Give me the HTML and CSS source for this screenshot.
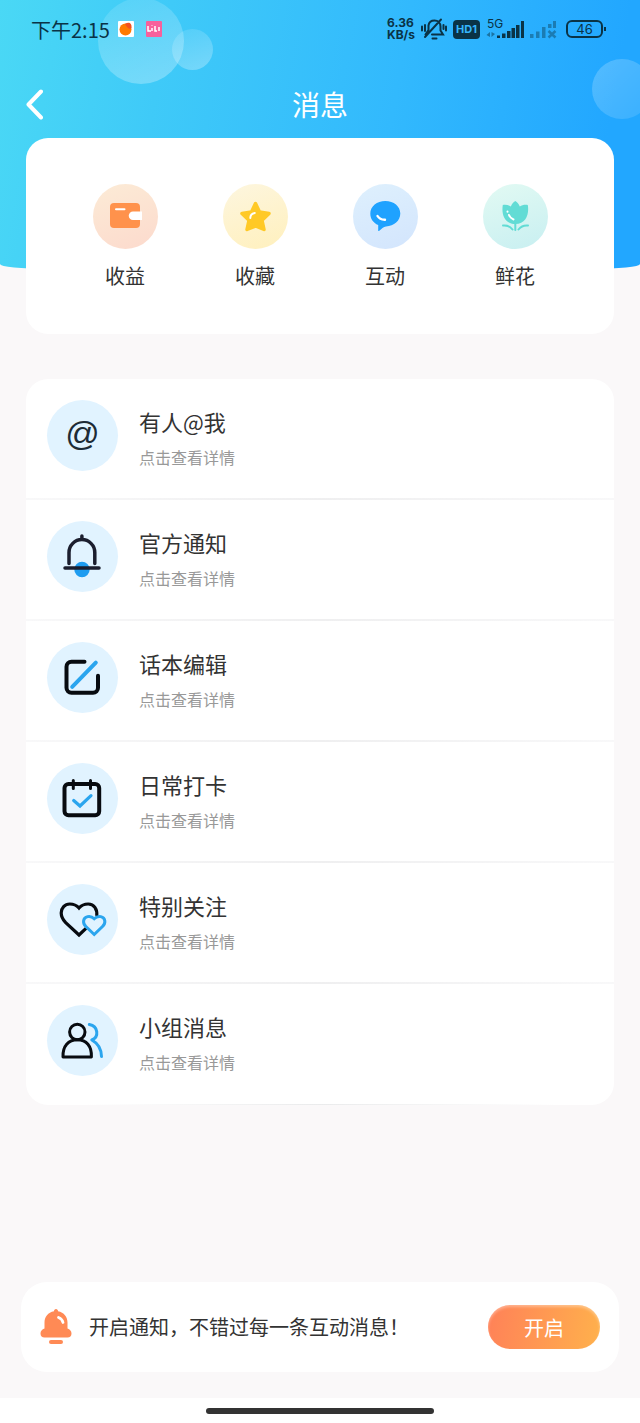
FILE: index.html
```html
<!DOCTYPE html>
<html lang="zh-CN">
<head>
    <meta charset="UTF-8">
    <meta name="viewport" content="width=device-width, initial-scale=1.0">
    <title>消息</title>
    <link rel="stylesheet" href="styles.css">
</head>
<body>
    <header class="header">
        <span class="bubble bubble-large"></span>
        <span class="bubble bubble-small"></span>
        <span class="bubble bubble-right"></span>

        <div class="status-bar">
            <span class="clock">下午2:15</span>
            <svg class="app-icon" width="16" height="16" viewBox="0 0 16 16">
                <rect width="16" height="16" rx="1" fill="#fff"/>
                <circle cx="7.5" cy="8.5" r="6" fill="#ff7a00"/>
                <path d="M7 3C10 1 14 1 13.500 7 12 9 9 7 7 3z" fill="#f4511e"/>
            </svg>
            <svg class="app-icon" width="16" height="16" viewBox="0 0 16 16">
                <rect width="16" height="16" rx="1" fill="#f7609c"/>
                <path d="M2 5v5h3M6 7v3M9 5v5h2M13 6v4M6 4.500v.5" fill="none" stroke="#fff" stroke-width="1.500"/>
            </svg>
            <div class="status-right">
                <div class="speed">
                    <span>6.36</span>
                    <span>KB/s</span>
                </div>
                <svg class="mute" width="26" height="24" viewBox="0 0 26 24" fill="none" stroke="#0a3346" stroke-width="2" stroke-linecap="round">
                    <path d="M11 17.500h11l-2.500-4V9.500C19.500 6 17 3.500 13.500 3.500c-3 0-5.500 1.500-6 5V13L4.500 17.500M20 2.500L4 20M11.500 21.500h4M1 9.500v4M4 8v6M25 9.500v4M22.500 8v4"/>
                </svg>
                <span class="hd">HD1</span>
                <div class="signal">
                    <span class="network">5G</span>
                    <svg width="39" height="22" viewBox="0 0 39 22" fill="#0a3346">
                        <path d="M11 17.500h3V20h-3zM16 15.500h3.500V20H16zM21 13h3.500v7H21zM25.500 10H29v10h-3.500zM30 7h3.500v13H30zM35 3h3v17h-3z"/>
                        <path d="M4 14v5l-3.500-2zM5.500 14v5l3.500-3z" opacity=".5"/>
                    </svg>
                </div>
                <svg class="signal-off" width="28" height="22" viewBox="0 0 28 22" fill="#0a3346" opacity=".4">
                    <path d="M1 16h3.500v4H1zM7 13.500h3.500V20H7zM13 9h3.500v11H13zM19 6h3.500v4H19zM24 3h3v7h-3z"/>
                    <path d="M19.500 13l7 6.500M26.500 13l-7 6.500" stroke="#0a3346" stroke-width="2.500"/>
                </svg>
                <span class="battery">46</span>
            </div>
        </div>

        <nav class="nav">
            <button class="back" type="button" aria-label="返回">
                <svg width="17" height="31" viewBox="0 0 17 31" fill="none" stroke="#fff" stroke-width="4" stroke-linecap="round" stroke-linejoin="round">
                    <path d="M15 2.500L2.500 15.500 15 28.500"/>
                </svg>
            </button>
            <h1 class="page-title">消息</h1>
        </nav>
    </header>

    <main class="content">
        <section class="card shortcuts">
            <a class="shortcut" href="#">
                <svg class="shortcut-icon income" viewBox="0 0 65 65">
                    <rect x="17" y="19" width="30" height="25" rx="4" fill="#ff924c"/>
                    <path d="M49 27.500H40a4.200 4.200 0 0 0 0 8.500h9z" fill="#fff"/>
                    <path d="M23 25.300h8.500" stroke="#fff" stroke-width="2" stroke-linecap="round"/>
                </svg>
                <span>收益</span>
            </a>
            <a class="shortcut" href="#">
                <svg class="shortcut-icon favorite" viewBox="0 0 65 65">
                    <path d="M32.500 19.500l4 8.500 9.500 1.500-7 6.800 2 9.200-8.500-3.500-8.500 3.500 2-9.200-7-6.800 9.500-1.500z" fill="#ffc926" stroke="#ffc926" stroke-width="3.500" stroke-linejoin="round"/>
                    <path d="M27.300 34c0-2.500 2-4.500 4.500-5" fill="none" stroke="#fff" stroke-width="2" stroke-linecap="round"/>
                </svg>
                <span>收藏</span>
            </a>
            <a class="shortcut" href="#">
                <svg class="shortcut-icon interact" viewBox="0 0 65 65">
                    <path d="M32.300 17c8.500 0 15 5.300 15 12.500S41 42 33 42.500c-2.500.3-4.500 2.500-7 4.500-.5.300-.800 0-.800-.5v-5.500c-5-2-7.900-6.300-7.900-11.500C17.300 22.300 24 17 32.300 17z" fill="#1fa2ff"/>
                    <path d="M24.500 32c1.500 2.500 4 3.800 7.500 3.700" fill="none" stroke="#fff" stroke-width="2.400" stroke-linecap="round"/>
                </svg>
                <span>互动</span>
            </a>
            <a class="shortcut" href="#">
                <svg class="shortcut-icon flower" viewBox="0 0 65 65" fill="none" stroke="#62dcd5" stroke-linecap="round">
                    <path d="M32.300 17c2 1.200 3.500 3 4.500 5.500 2.200-1.500 5-2 8-1.500 1.500 9-1.500 19-12.500 19s-14-10-12.500-19c3-.5 5.500 0 8 1.500 1-2.500 2.500-4.300 4.500-5.500z" fill="#62dcd5" stroke="none"/>
                    <path d="M32.300 38v8M20 41.500c4-.5 7 .8 9.500 4M45 41.500c-4-.5-7 .8-9.500 4" stroke-width="2"/>
                    <path d="M26 31c1 2.500 2.500 3.800 4.500 4.500M24.500 27.500v.2" stroke="#fff" stroke-width="2"/>
                </svg>
                <span>鲜花</span>
            </a>
        </section>

        <section class="card messages">
            <a class="message" href="#">
                <span class="message-icon at">@</span>
                <span class="message-text">
                    <span class="message-title">有人@我</span>
                    <span class="message-desc">点击查看详情</span>
                </span>
            </a>
            <a class="message" href="#">
                <svg class="message-icon" viewBox="0 0 71 71">
                    <circle cx="35" cy="48.500" r="7.700" fill="#1e9cf0"/>
                    <path d="M22 42.500V31.500a12.900 12.900 0 0 1 25.800 0v11M34.900 18v-3M18 47h34" fill="none" stroke="#1b1e2e" stroke-width="3.500" stroke-linecap="round"/>
                </svg>
                <span class="message-text">
                    <span class="message-title">官方通知</span>
                    <span class="message-desc">点击查看详情</span>
                </span>
            </a>
            <a class="message" href="#">
                <svg class="message-icon" viewBox="0 0 71 71" fill="none" stroke="#080b10" stroke-width="4" stroke-linecap="round">
                    <path d="M37.500 19.700H24.500a5 5 0 0 0-5 5v21a5 5 0 0 0 5 5h21.500a5 5 0 0 0 5-5v-12"/>
                    <path d="M48.800 20.700L25.200 44.800" stroke="#2ba5ee"/>
                </svg>
                <span class="message-text">
                    <span class="message-title">话本编辑</span>
                    <span class="message-desc">点击查看详情</span>
                </span>
            </a>
            <a class="message" href="#">
                <svg class="message-icon" viewBox="0 0 71 71" fill="none" stroke="#080b10" stroke-width="4" stroke-linecap="round">
                    <rect x="17.500" y="21" width="34.700" height="31.300" rx="4"/>
                    <path d="M26.300 17.500v8M43.500 17.500v8" stroke-width="3"/>
                    <path d="M26.700 37.500l6.300 5.500 11-10.300" stroke="#2ba5ee" stroke-width="3.200"/>
                </svg>
                <span class="message-text">
                    <span class="message-title">日常打卡</span>
                    <span class="message-desc">点击查看详情</span>
                </span>
            </a>
            <a class="message" href="#">
                <svg class="message-icon" viewBox="0 0 71 71" fill="none" stroke="#080b10" stroke-width="3.200">
                    <path d="M49.800 32C50.400 25 47 20 41.200 20c-4 0-7 1.500-9.200 4-2.200-2.500-5.200-4-9.200-4-5 0-8.600 4-8.600 9 0 4 1.500 6.500 4.500 9.700L32 51l7-6.700"/>
                    <path d="M47.200 50.500l-8.300-8c-2-2-2.700-3.500-2.300-5.800.7-4.200 6.500-6 10.600-2 4.100-4 9.900-2.200 10.600 2 .4 2.300-.3 3.800-2.300 5.800z" stroke="#2ba5ee" stroke-width="3"/>
                </svg>
                <span class="message-text">
                    <span class="message-title">特别关注</span>
                    <span class="message-desc">点击查看详情</span>
                </span>
            </a>
            <a class="message" href="#">
                <svg class="message-icon" viewBox="0 0 71 71" fill="none" stroke="#080b10" stroke-width="3" stroke-linejoin="round">
                    <circle cx="30.300" cy="27" r="7.700"/>
                    <path d="M16 52c-.5-11 5.500-17.300 14.400-17.300S44.900 41 44.400 52z"/>
                    <path d="M42.300 19.500c9 1.500 10 12.500 2.500 15.500 6.500 3.500 9.500 9 9.700 16.500" stroke="#2ba5ee" stroke-linecap="round"/>
                </svg>
                <span class="message-text">
                    <span class="message-title">小组消息</span>
                    <span class="message-desc">点击查看详情</span>
                </span>
            </a>
        </section>
    </main>

    <section class="notice">
        <svg width="32" height="36" viewBox="0 0 32 36" fill="#ff8a55">
            <path d="M16 0c1.200 0 2 1 2 2.200 6 1.200 9.500 5.500 9.500 11.300v6c2.500 1 4 2.500 4 5 0 2.500-1.500 4-4 4h-23c-2.500 0-4-1.500-4-4 0-2.500 1.500-4 4-5v-6C4.500 7.700 8 3.400 14 2.200 14 1 14.800 0 16 0z"/>
            <rect x="9" y="31" width="14" height="4" rx="2"/>
            <path d="M18.500 8.500c2.500 1 4 2.500 4.500 5" fill="none" stroke="#fff" stroke-width="2.800" stroke-linecap="round"/>
        </svg>
        <p class="notice-text">开启通知，不错过每一条互动消息！</p>
        <button class="enable-btn" type="button">开启</button>
    </section>

    <footer class="gesture-bar">
        <span class="gesture-handle"></span>
    </footer>
</body>
</html>
```
FILE: styles.css
```css
* {
    box-sizing: border-box;
}
body {
    margin: 0;
    min-height: 100vh;
    display: flex;
    flex-direction: column;
    background-color: #faf8f9;
    color: #333;
    font-family: "Noto Sans CJK SC", sans-serif;
}
a {
    color: inherit;
    text-decoration: none;
}
button {
    border: none;
    font-family: inherit;
    cursor: pointer;
}

/* Header */
.header {
    position: relative;
    overflow: hidden;
    padding-bottom: 119px;
    border-radius: 0 0 48px 48px / 0 0 5px 5px;
    background: linear-gradient(100deg, #4ad8f5 0%, #3fcaf8 25%, #32b9fd 60%, #22a7ff 92%);
}
.bubble {
    position: absolute;
    border-radius: 50%;
    background: linear-gradient(160deg, rgba(255, 255, 255, 0.1), rgba(255, 255, 255, 0.3));
}
.bubble-large {
    top: -2px;
    left: 98px;
    width: 86px;
    height: 86px;
}
.bubble-small {
    top: 29px;
    left: 172px;
    width: 41px;
    height: 41px;
}
.bubble-right {
    top: 59px;
    right: -12px;
    width: 60px;
    height: 60px;
    background: linear-gradient(135deg, rgba(255, 255, 255, 0.22), rgba(255, 255, 255, 0.1));
}
.status-bar {
    position: relative;
    display: flex;
    align-items: center;
    height: 58px;
    padding: 0 34px 0 31px;
    color: #0a3346;
}
.clock {
    font-size: 20px;
}
.app-icon {
    margin-left: 8px;
}
.app-icon + .app-icon {
    margin-left: 12px;
}
.status-right {
    display: flex;
    align-items: center;
    margin-left: auto;
    font-family: Inter, sans-serif;
}
.speed {
    display: flex;
    flex-direction: column;
    font-size: 12px;
    font-weight: 700;
    line-height: 12px;
}
.mute {
    margin-left: 6px;
}
.hd {
    width: 27px;
    margin-left: 6px;
    border-radius: 4px;
    background-color: #0a3346;
    color: #35b6fc;
    font-size: 11px;
    font-weight: 700;
    line-height: 19px;
    text-align: center;
}
.signal {
    position: relative;
    display: flex;
    margin-left: 6px;
}
.network {
    position: absolute;
    top: 0;
    left: 1px;
    font-size: 12px;
    line-height: 12px;
}
.signal-off {
    margin-left: 4px;
}
.battery {
    position: relative;
    width: 37px;
    margin: 0 3px 0 9px;
    border: 2px solid #0a3346;
    border-radius: 6px;
    font-size: 13px;
    line-height: 14px;
    text-align: center;
}
.battery::after {
    content: "";
    position: absolute;
    top: 5px;
    right: -5px;
    width: 2px;
    height: 4px;
    background-color: #0a3346;
}
.nav {
    position: relative;
    display: flex;
    align-items: center;
    height: 92px;
    padding: 0 26px;
}
.back {
    display: flex;
    width: 28px;
    padding: 0;
    background: none;
}
.page-title {
    flex: 1;
    margin: 0 28px 0 0;
    color: #fff;
    font-size: 28px;
    font-weight: 400;
    line-height: 40px;
    text-align: center;
}

/* Cards */
.content {
    position: relative;
    display: flex;
    flex-direction: column;
    gap: 45px;
    margin-top: -131px;
    padding: 0 26px 40px;
}
.card {
    border-radius: 22px;
    background-color: #fff;
}
.shortcuts {
    display: flex;
    padding: 46px 34px 44px;
}
.shortcut {
    flex: 1;
    display: flex;
    flex-direction: column;
    align-items: center;
    gap: 12px;
    font-size: 20px;
    line-height: 29px;
}
.shortcut-icon {
    width: 65px;
    height: 65px;
    border-radius: 50%;
}
.income {
    background: linear-gradient(160deg, #fcebd6, #fcdacd);
}
.favorite {
    background: linear-gradient(160deg, #fdf6df, #fff0bd);
}
.interact {
    background: linear-gradient(160deg, #def0fd, #d3e5fd);
}
.flower {
    background: linear-gradient(160deg, #e2faf3, #c8eff1);
}

/* Message list */
.message {
    position: relative;
    display: flex;
    align-items: flex-start;
    gap: 21px;
    height: 121px;
    padding: 21px;
}
.message::after {
    content: "";
    position: absolute;
    right: 0;
    bottom: 0;
    left: 0;
    height: 2px;
    background: linear-gradient(to right, #f8f8f9, #efeff0, #f8f8f9);
}
.message:last-child::after {
    height: 1px;
    background: linear-gradient(to right, transparent 10%, #eaebec, transparent 90%);
}
.message-icon {
    flex: none;
    width: 71px;
    height: 71px;
    border-radius: 50%;
    background-color: #e1f3ff;
}
.at {
    color: #1d2b36;
    font-family: "Liberation Sans", sans-serif;
    font-size: 34px;
    line-height: 66px;
    text-align: center;
}
.message-text {
    display: flex;
    flex-direction: column;
    gap: 8px;
    padding-top: 5px;
}
.message-title {
    font-size: 22px;
    line-height: 32px;
}
.message-desc {
    color: #999;
    font-size: 16px;
    line-height: 24px;
}

/* Bottom notice */
.notice {
    display: flex;
    align-items: center;
    gap: 17px;
    min-height: 90px;
    margin: auto 21px 26px;
    padding: 0 19px;
    border-radius: 26px;
    background-color: #fff;
}
.notice-text {
    flex: 1;
    margin: 0;
    font-size: 20px;
    line-height: 30px;
}
.enable-btn {
    width: 112px;
    height: 44px;
    padding: 0;
    border-radius: 22px;
    background: linear-gradient(100deg, #ff8158, #ffb14c);
    box-shadow: inset 0 2px 3px rgba(255, 255, 255, 0.35);
    color: #fff;
    font-size: 20px;
}
.gesture-bar {
    display: flex;
    align-items: center;
    justify-content: center;
    height: 25px;
    background-color: #fff;
}
.gesture-handle {
    width: 228px;
    height: 6px;
    border-radius: 3px;
    background-color: #333;
}
```
